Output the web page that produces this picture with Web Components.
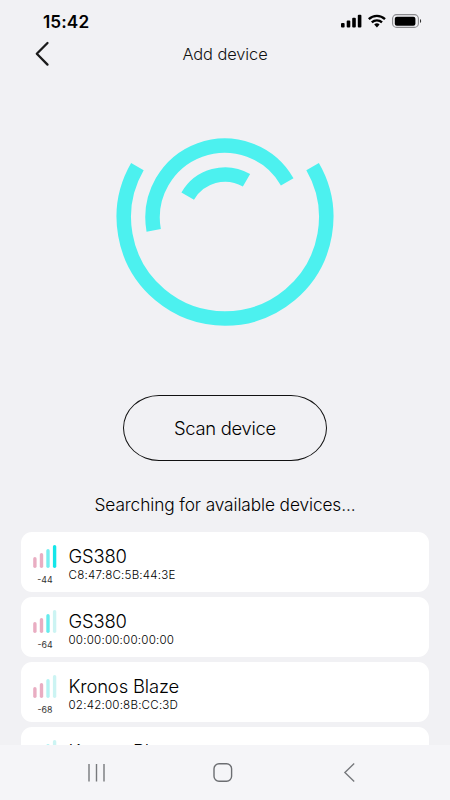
<!DOCTYPE html>
<html lang="en">
<head>
<meta charset="utf-8">
<title>Add device</title>
<style>
html,body{margin:0;height:100%}
body{background:#f1f1f4;font-family:Inter,"Liberation Sans",sans-serif;color:#111;overflow:hidden}
</style>
</head>
<body>
<add-device-screen></add-device-screen>
<script>
const define = (name, html, setup) => {
  const tpl = document.createElement('template');
  tpl.innerHTML = html;
  customElements.define(name, class extends HTMLElement {
    constructor() {
      super();
      this.attachShadow({mode: 'open'}).append(tpl.content.cloneNode(true));
    }
    connectedCallback() { if (setup) setup(this, this.shadowRoot); }
  });
};

define('status-bar', `<style>
:host{display:flex;justify-content:space-between;height:36px;box-sizing:border-box;padding:11px 28px 0 43px;color:#000}
.time{font-size:17.2px;line-height:21px;font-weight:600;letter-spacing:.1px}
svg{display:block;margin-top:2px}
</style>
<span class="time"><slot></slot></span>
<svg width="82" height="16" viewBox="340 13 82 16">
<g fill="#000"><rect x="341" y="23" width="3.6" height="4.4" rx="1"/><rect x="346.7" y="20.4" width="3.6" height="7" rx="1"/><rect x="352.2" y="17.8" width="3.6" height="9.6" rx="1"/><rect x="357.8" y="14.8" width="3.6" height="12.6" rx="1"/></g>
<g fill="none" stroke="#000" stroke-width="2.3"><path d="M368.8 19.1a11.6 11.6 0 0 1 16.2 0"/><path d="M371.8 22.4a7.3 7.3 0 0 1 10.2 0"/></g>
<path d="M374.2 24.6a4 4 0 0 1 5.4 0L376.9 27.4z" fill="#000"/>
<rect x="392.6" y="14.6" width="25.8" height="12.8" rx="4" fill="none" stroke="#8b8b8e" stroke-width="1.1"/>
<rect x="394.8" y="16.7" width="20.6" height="9" rx="2" fill="#000"/>
<path d="M420 19a2.3 2.3 0 0 1 0 4z" fill="#333"/>
</svg>`);

define('title-bar', `<style>
:host{display:grid;grid-template-columns:1fr auto 1fr;align-items:center;height:36px;padding:0 34px}
svg{display:block}
h1{margin:0;font-weight:350;font-size:16.4px;line-height:20px;letter-spacing:-.08px}
</style>
<svg width="16" height="26" viewBox="0 0 16 26" fill="none" stroke="#1b1b1b" stroke-width="2.3" stroke-linecap="round" stroke-linejoin="round"><path d="M13.5 2L2.8 12.8L13.5 23.6"/></svg>
<h1><slot></slot></h1>`);

define('scan-spinner', `<style>
:host{display:flex;justify-content:center;padding-top:64px}
svg{display:block}
</style>
<svg width="220" height="192" viewBox="-110 -81.2 220 192" fill="none" stroke="#4cf1ef" stroke-width="14.5">
<path d="M-87.6 -50.6A101.2 101.2 0 1 0 87.6 -50.6"/>
<path d="M-71.3 13.2A72.1 72.1 0 0 1 62.2 -35.4"/>
<path d="M-37.3 -21.1A43 43 0 0 1 21.5 -36.9"/>
</svg>`);

define('pill-button', `<style>
:host{display:flex;justify-content:center;padding-top:67px}
button{box-sizing:border-box;width:204px;height:66px;padding:0;border:1.2px solid #111;border-radius:36px/33px;background:none;font:350 18.4px/24px Inter,"Liberation Sans",sans-serif;letter-spacing:-.28px;color:#000}
</style><button type="button"><slot></slot></button>`);

define('signal-meter', `<style>
:host{display:flex;flex-direction:column;align-items:center;width:24px}
svg{display:block}
span{font-size:8.8px;line-height:10px;margin-top:6px;color:#333}
</style>
<svg width="24" height="25" viewBox="0 0 24 25"><rect x=".2" y="13" width="3.4" height="11" rx="1.7"/><rect x="6.8" y="9" width="3.4" height="15" rx="1.7"/><rect x="13.3" y="5" width="3.4" height="19" rx="1.7"/><rect x="19.9" y="1" width="3.4" height="23" rx="1.7"/></svg>
<span></span>`, (el, root) => {
  const colors = el.getAttribute('colors').split(' ');
  root.querySelectorAll('rect').forEach((bar, i) => bar.setAttribute('fill', colors[i]));
  root.querySelector('span').textContent = el.getAttribute('level');
});

define('device-card', `<style>
:host{display:flex;flex:none;box-sizing:border-box;height:60px;background:#fff;border-radius:11px;padding:12px 12px 0}
.info{margin:1px 0 0 11.5px;color:#000}
.name{font-size:18.4px;line-height:23px;font-weight:350;letter-spacing:-.14px}
.mac{font-size:11.6px;line-height:14px;font-weight:350;letter-spacing:.2px}
</style>
<slot name="signal"></slot>
<div class="info"><div class="name"><slot name="name"></slot></div><div class="mac"><slot></slot></div></div>`);

define('device-list', `<style>
:host{display:flex;flex-direction:column;gap:5px;padding:0 21px;overflow:hidden;flex:1;min-height:0}
</style><slot></slot>`);

define('nav-bar', `<style>
:host{display:grid;grid-template-columns:1fr 1fr 1fr;justify-items:center;align-items:center;flex:none;height:55px;box-sizing:border-box;padding:0 35px 0 32px;background:#f5f5f8}
svg{display:block}
</style>
<svg width="20" height="20" fill="none" stroke="#77797d" stroke-width="1.4"><path d="M3 1v17.5M10.5 1v17.5M18 1v17.5"/></svg>
<svg width="20" height="20" fill="none" stroke="#6c6e72" stroke-width="1.4"><rect x="1" y=".8" width="17.6" height="17.4" rx="5"/></svg>
<svg width="20" height="20" fill="none" stroke="#77797d" stroke-width="1.4"><path d="M13.2 .5L3.9 9.5L13.2 18.5"/></svg>`);

define('add-device-screen', `<style>
:host{display:flex;flex-direction:column;width:450px;height:800px;background:#f1f1f4}
p{margin:34px 0 17px;text-align:center;font-size:17.3px;line-height:20px;font-weight:350;letter-spacing:-.11px;color:#000;flex:none}
</style>
<status-bar>15:42</status-bar>
<title-bar>Add device</title-bar>
<scan-spinner></scan-spinner>
<pill-button>Scan device</pill-button>
<p>Searching for available devices...</p>
<device-list>
<device-card><signal-meter slot="signal" level="-44" colors="#e9adc2 #e9adc2 #77edef #14e6e9"></signal-meter><span slot="name">GS380</span>C8:47:8C:5B:44:3E</device-card>
<device-card><signal-meter slot="signal" level="-64" colors="#e9adc2 #e9adc2 #66ebed #ccf4f3"></signal-meter><span slot="name">GS380</span>00:00:00:00:00:00</device-card>
<device-card><signal-meter slot="signal" level="-68" colors="#e9adc2 #e9adc2 #b5f2f2 #ccf4f3"></signal-meter><span slot="name">Kronos Blaze</span>02:42:00:8B:CC:3D</device-card>
<device-card><signal-meter slot="signal" level="" colors="#e9adc2 #e9adc2 #b5f2f2 #ccf4f3"></signal-meter><span slot="name">Kronos Blaze</span></device-card>
</device-list>
<nav-bar></nav-bar>`);
</script>
</body>
</html>
